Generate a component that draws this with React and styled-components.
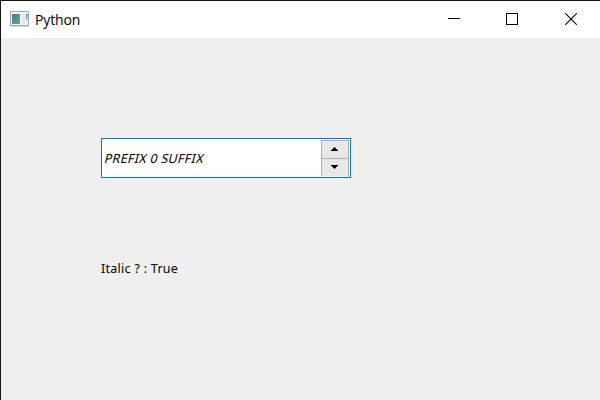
import React from "react";
import styled, { createGlobalStyle } from "styled-components";

const GlobalStyle = createGlobalStyle`
  body { margin: 0; overflow: hidden; }
`;

const Window = styled.main`
  box-sizing: border-box;
  width: 600px;
  height: 400px;
  display: flex;
  flex-direction: column;
  border-top: 1px solid #141216;
  border-left: 1px solid #141216;
  background: #efefef;
  color: #000;
  font-family: "Noto Sans", sans-serif;
`;

const TitleBar = styled.header`
  display: flex;
  flex: none;
  height: 37px;
  background: #fff;
`;

const AppIcon = styled.svg`
  display: block;
  flex: none;
  margin: 10px 6px 0 9px;
`;

const Title = styled.h1`
  flex: 1;
  margin: 0;
  font-family: "Open Sans", sans-serif;
  font-size: 14px;
  font-weight: 400;
  letter-spacing: -0.15px;
  line-height: 37px;
`;

const Controls = styled.div`
  display: flex;
`;

const ControlButton = styled.button`
  box-sizing: border-box;
  width: ${(p) => (p.$last ? 59 : 58)}px;
  height: 36px;
  padding: 0 0 0 ${(p) => (p.$last ? 1 : 0)}px;
  border: 0;
  background: transparent;
  display: grid;
  place-items: center;
`;

const Glyph = styled.svg`
  display: block;
  shape-rendering: ${(p) => (p.$smooth ? "auto" : "crispEdges")};
`;

const Content = styled.section`
  padding: 100px 0 0 100px;
`;

const SpinBox = styled.div`
  box-sizing: border-box;
  display: flex;
  width: 250px;
  height: 40px;
  padding: 1px;
  border: 1px solid #0078d7;
  background: #fff;
`;

const Value = styled.span`
  flex: 1;
  padding: 1px 0 0 2px;
  font-size: 12.5px;
  letter-spacing: 0.3px;
  line-height: 36px;
  white-space: pre;
  transform: skewX(-14deg);
`;

const Stepper = styled.div`
  box-sizing: border-box;
  display: grid;
  grid-template-rows: 17px 17px;
  gap: 1px;
  width: 28px;
  height: 36px;
  border: 1px solid #adadad;
  background: #adadad;
`;

const StepButton = styled.button`
  padding: 6px 0 0;
  border: 0;
  background: #e8e8e8;
  display: flex;
  align-items: flex-start;
  justify-content: center;
`;

const Status = styled.p`
  margin: 81px 0 0;
  font-size: 12.5px;
  letter-spacing: 0.28px;
  line-height: 20px;
  white-space: pre;
`;

export default function App() {
  return (
    <>
      <GlobalStyle />
      <Window>
        <TitleBar>
          <AppIcon width="19" height="16" viewBox="0 0 19 16">
            <defs>
              <linearGradient id="screen" x1="0" y1="0" x2="1" y2="1">
                <stop offset="0" stopColor="#4475a0" />
                <stop offset="1" stopColor="#5bb477" />
              </linearGradient>
              <linearGradient id="strip" x1="0" y1="0" x2="0" y2="1">
                <stop offset="0" stopColor="#4a7fb0" />
                <stop offset="1" stopColor="#8ccca0" />
              </linearGradient>
            </defs>
            <rect x="0.5" y="0.5" width="18" height="14" fill="#f3f4f5" stroke="#a2a9ae" />
            <rect y="15" width="19" height="1" fill="#d9dcde" />
            <rect x="2" y="3" width="8" height="10" fill="url(#screen)" />
            <rect x="12" y="3" width="3" height="10" fill="#e5e8ea" />
            <rect x="16" y="3" width="1.5" height="6" fill="url(#strip)" />
          </AppIcon>
          <Title>Python</Title>
          <Controls>
            <ControlButton aria-label="Minimize">
              <Glyph width="12" height="12" viewBox="0 0 12 12">
                <path d="M0 5.5H12" stroke="#000" />
              </Glyph>
            </ControlButton>
            <ControlButton aria-label="Maximize">
              <Glyph width="12" height="12" viewBox="0 0 12 12">
                <rect x="0.5" y="0.5" width="11" height="11" fill="none" stroke="#000" />
              </Glyph>
            </ControlButton>
            <ControlButton $last aria-label="Close">
              <Glyph $smooth width="12" height="12" viewBox="0 0 12 12">
                <path d="M0.2 0.2L11.8 11.8M11.8 0.2L0.2 11.8" stroke="#000" strokeWidth="1.1" />
              </Glyph>
            </ControlButton>
          </Controls>
        </TitleBar>
        <Content>
          <SpinBox>
            <Value>PREFIX 0 SUFFIX</Value>
            <Stepper>
              <StepButton aria-label="Increase">
                <Glyph width="8" height="4" viewBox="0 0 8 4">
                  <path d="M3 0H4V1H5V2H6V3H7V4H0V3H1V2H2V1H3Z" />
                </Glyph>
              </StepButton>
              <StepButton aria-label="Decrease">
                <Glyph width="8" height="4" viewBox="0 0 8 4">
                  <path d="M0 0H7V1H6V2H5V3H4V4H3V3H2V2H1V1H0Z" />
                </Glyph>
              </StepButton>
            </Stepper>
          </SpinBox>
          <Status>Italic ? : True</Status>
        </Content>
      </Window>
    </>
  );
}
